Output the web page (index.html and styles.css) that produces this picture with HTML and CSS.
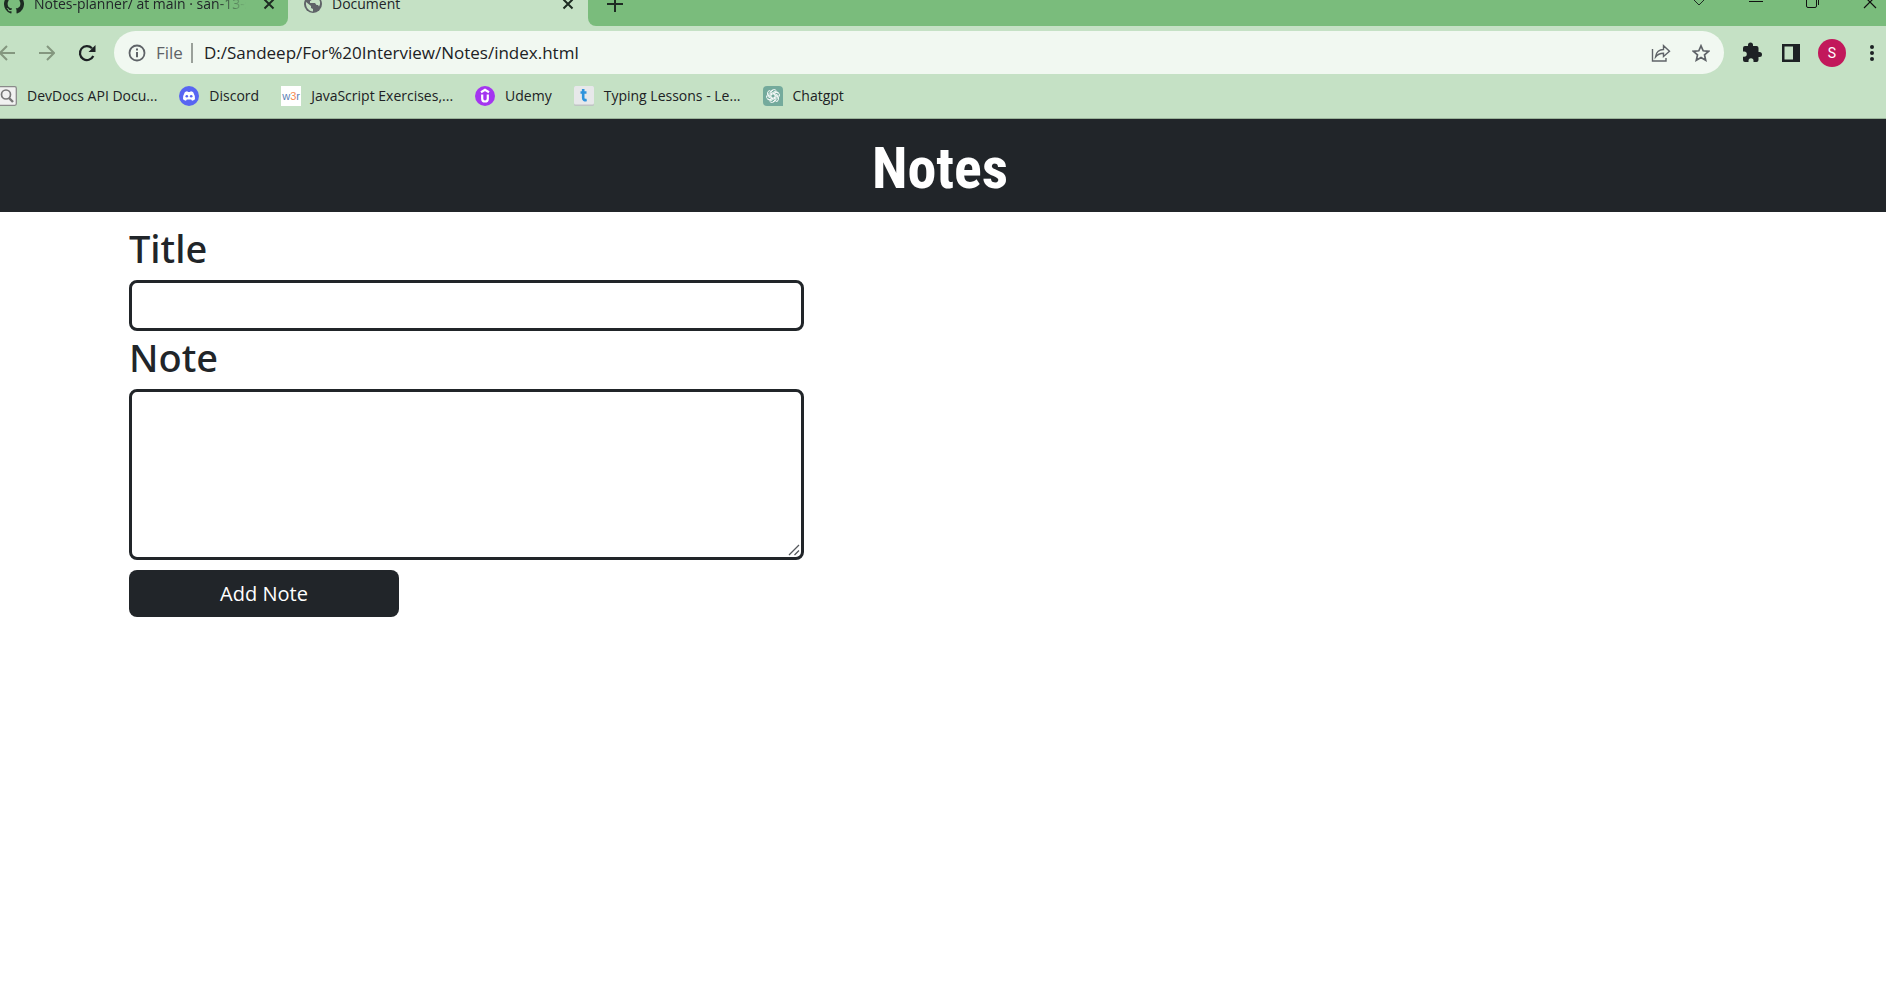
FILE: index.html
```html
<!DOCTYPE html>
<html lang="en">
<head>
<meta charset="utf-8">
<title>Document</title>
<link rel="stylesheet" href="styles.css">
</head>
<body>
<div class="browser">
  <div class="tabstrip">
    <div class="tab tab-first">
      <svg class="icon20" viewBox="0 0 16 16" fill="#1d2b22"><path d="M8 0a8 8 0 0 0-2.5 15.6c.4.1.5-.2.5-.4v-1.5c-2 .4-2.5-.5-2.700-1-.1-.2-.5-.9-.8-1.100-.3-.1-.7-.5 0-.5.600 0 1.100.6 1.200.8.7 1.200 1.900.9 2.300.7.1-.5.3-.9.5-1.100-1.800-.2-3.600-.9-3.600-4 0-.9.3-1.600.8-2.100 0-.2-.3-1 .1-2.100 0 0 .7-.2 2.200.8a7.500 7.500 0 0 1 4 0c1.500-1 2.200-.8 2.200-.8.4 1.100.2 1.900.1 2.100.5.6.8 1.300.8 2.100 0 3.100-1.900 3.800-3.700 4 .3.3.6.8.6 1.500v2.200c0 .2.1.5.5.4A8 8 0 0 0 8 0z"/></svg>
      <span class="tab-title fade">Notes-planner/ at main · san-13-s</span>
      <button class="x" aria-label="Close tab"><svg width="12" height="12" viewBox="0 0 12 12"><path d="M1.500 1.500l9 9M10.500 1.500l-9 9" stroke="#1d2b22" stroke-width="2"/></svg></button>
    </div>
    <div class="tab tab-active">
      <svg class="icon20" viewBox="0 0 20 20"><circle cx="10" cy="10" r="9" fill="#5f6368"/><path d="M3 8l5 4v2l2 1v2.500C5 17 2.500 13 3 8zM12 2.800c0 2-2 2-3 2.500-.5 1-1 1.500-2 1.700v2h5l1.500 2h1.500l1 1.500c2.500-4 .5-8.500-4-9.700z" fill="#c5e1c5"/></svg>
      <span class="tab-title">Document</span>
      <button class="x" aria-label="Close tab"><svg width="12" height="12" viewBox="0 0 12 12"><path d="M1.500 1.500l9 9M10.500 1.500l-9 9" stroke="#1d2b22" stroke-width="2"/></svg></button>
    </div>
    <div class="tab-rest">
      <button class="x" aria-label="New tab"><svg width="16" height="16" viewBox="0 0 16 16"><path d="M8 0v16M0 8h16" stroke="#1d2b22" stroke-width="2"/></svg></button>
      <div class="window-buttons">
        <button aria-label="Search tabs"><svg width="14" height="20" viewBox="0 0 14 20"><path d="M2 6l5 5 5-5" fill="none" stroke="#1d2b22"/></svg></button>
        <button aria-label="Minimize"><svg width="14" height="20" viewBox="0 0 14 20"><path d="M0 7.500h14" stroke="#111"/></svg></button>
        <button aria-label="Restore"><svg width="14" height="20" viewBox="0 0 14 20"><rect x=".5" y="3.500" width="10" height="10" rx="1.500" fill="none" stroke="#111"/><path d="M3 1.500h7.500a2 2 0 0 1 2 2V11" fill="none" stroke="#111"/></svg></button>
        <button aria-label="Close"><svg width="14" height="20" viewBox="0 0 14 20"><path d="M1 2l12 12M13 2L1 14" stroke="#111" stroke-width="1.200"/></svg></button>
      </div>
    </div>
  </div>

  <div class="toolbar">
    <div class="nav">
      <button aria-label="Back"><svg width="16" height="18" viewBox="0 0 16 18"><path d="M15 9H0M7 2L0 9l7 7" fill="none" stroke="#84977f" stroke-width="2"/></svg></button>
      <button aria-label="Forward"><svg width="16" height="18" viewBox="0 0 16 18"><path d="M0 9h15M8 2l7 7-7 7" fill="none" stroke="#84977f" stroke-width="2"/></svg></button>
      <button aria-label="Reload"><svg width="18" height="18" viewBox="0 0 18 18"><path d="M15.300 12A7 7 0 1 1 14 4.200" fill="none" stroke="#1d2124" stroke-width="2.200"/><path d="M17.500 1v7h-7z" fill="#1d2124"/></svg></button>
    </div>
    <div class="address">
      <svg width="18" height="18" viewBox="0 0 18 18"><circle cx="9" cy="9" r="7.500" fill="none" stroke="#5f6368" stroke-width="1.800"/><path d="M9 8v5.300M9 4.600v2" stroke="#5f6368" stroke-width="2"/></svg>
      <label class="scheme" for="url">File</label>
      <input id="url" class="url" type="text" value="D:/Sandeep/For%20Interview/Notes/index.html">
      <button aria-label="Share"><svg width="20" height="18" viewBox="0 0 20 18"><path d="M1.500 5v12h13.500v-3M4.500 13c.5-5 4-7.500 8-7.500V1.700l6 5.500-6 5.300V9.200c-3.500 0-6 1-8 3.800z" fill="none" stroke="#5f6368" stroke-width="1.400"/></svg></button>
      <button aria-label="Bookmark"><svg width="18" height="18" viewBox="0 0 18 18"><path d="M9 1.800l2.200 5 5.400.5-4.100 3.600 1.200 5.300L9 13.400l-4.700 2.800 1.200-5.300L1.400 7.300l5.400-.5z" fill="none" stroke="#5f6368" stroke-width="1.700"/></svg></button>
    </div>
    <div class="actions">
      <button aria-label="Extensions"><svg width="24" height="24" viewBox="0 0 24 24" fill="#1d2124"><path d="M19.500 11H18.500V7a2 2 0 0 0-2-2h-3.500V4a2.500 2.500 0 0 0-5 0v1H5a2 2 0 0 0-2 2v3.500h1.200a2.500 2.500 0 0 1 0 5.200H3V19a2 2 0 0 0 2 2h3.500v-1.200a2.500 2.500 0 0 1 5 0V21h3a2 2 0 0 0 2-2v-3h1a2.500 2.500 0 0 0 0-5z"/></svg></button>
      <button aria-label="Side panel"><svg width="24" height="24" viewBox="0 0 24 24"><path fill-rule="evenodd" d="M3 3h18v18H3zM5.500 5.500v13H14v-13z" fill="#1d2124"/></svg></button>
      <button class="avatar">S</button>
      <button aria-label="Menu"><svg width="22" height="22" viewBox="0 0 22 22" fill="#1d2124"><circle cx="11" cy="5" r="2"/><circle cx="11" cy="11" r="2"/><circle cx="11" cy="17" r="2"/></svg></button>
    </div>
  </div>

  <nav class="bookmarks">
    <a href="#"><svg class="icon20" viewBox="0 0 20 20"><rect x=".7" y=".7" width="18.600" height="18.600" rx="1.500" fill="#f1f1f1" stroke="#8a8a8a" stroke-width="1.300"/><circle cx="9" cy="8.500" r="4.500" fill="none" stroke="#777" stroke-width="1.700"/><path d="M12 12l4 4" stroke="#777" stroke-width="2.400"/></svg><span>DevDocs API Docu...</span></a>
    <a href="#"><svg class="icon20" viewBox="0 0 20 20"><circle cx="10" cy="10" r="10" fill="#5865f2"/><path d="M5.800 6.200Q7 5.500 8.400 5.300l.4.8h2.400l.4-.8q1.400.2 2.600.9 2 3.300 1.800 7-1.400 1.100-3 1.500l-.8-1.200H7.800L7 14.700q-1.600-.4-3-1.500-.2-3.700 1.800-7z" fill="#fff"/><circle cx="7.800" cy="10.300" r="1.300" fill="#5865f2"/><circle cx="12.200" cy="10.300" r="1.300" fill="#5865f2"/></svg><span>Discord</span></a>
    <a href="#"><span class="w3r" aria-hidden="true">w<b>3</b>r</span><span>JavaScript Exercises,...</span></a>
    <a href="#"><svg class="icon20" viewBox="0 0 20 20"><circle cx="10" cy="10" r="10" fill="#a435f0"/><path d="M6 6.200l4-2.400 4 2.400M7.200 8.500v4.200a2.800 2.800 0 0 0 5.600 0V8.500" fill="none" stroke="#fff" stroke-width="2.200"/></svg><span>Udemy</span></a>
    <a href="#"><svg class="icon20" viewBox="0 0 20 20"><rect width="20" height="20" rx="1.500" fill="#bfc5c3"/><rect width="20" height="18.500" rx="1.500" fill="#e7e8ea"/><path d="M9.200 3v9q0 2.500 3.500 2M6.500 6.500h6" fill="none" stroke="#2e93dc" stroke-width="2.600"/></svg><span>Typing Lessons - Le...</span></a>
    <a href="#"><svg class="icon20" viewBox="0 0 20 20"><path d="M4 0h12a4 4 0 0 1 4 4v16H4a4 4 0 0 1-4-4V4a4 4 0 0 1 4-4z" fill="#74aa9c"/><g fill="none" stroke="#fff" stroke-width=".9"><path id="k" d="M8 11.200V6.500a3 3 0 0 1 5.500-1.600M8 7.700l4-2.300 3 1.700"/><use href="#k" transform="rotate(60 10 10)"/><use href="#k" transform="rotate(120 10 10)"/><use href="#k" transform="rotate(180 10 10)"/><use href="#k" transform="rotate(240 10 10)"/><use href="#k" transform="rotate(300 10 10)"/></g></svg><span>Chatgpt</span></a>
  </nav>
</div>

<header class="page-header"><h1>Notes</h1></header>

<main class="container">
  <form class="note-form">
    <label for="title">Title</label>
    <input id="title" class="field" type="text">
    <label for="note">Note</label>
    <div class="note-wrap">
      <textarea id="note" class="field note"></textarea>
      <svg class="grip" width="12" height="12" viewBox="0 0 12 12"><path d="M1 11L11 1M6.500 11L11 6.500" stroke="#55585c" stroke-width="1.300"/></svg>
    </div>
    <button class="add" type="button">Add Note</button>
  </form>
</main>
</body>
</html>
```
FILE: styles.css
```css
* { box-sizing: border-box; }
body {
  margin: 0;
  background: #fff;
  color: #212529;
  font-family: "Open Sans", "Noto Sans", sans-serif;
}
button { padding: 0; border: 0; background: none; font: inherit; color: inherit; }
svg { display: block; flex: none; }
.icon20 { width: 20px; height: 20px; }

.browser { background: #c5e1c5; border-bottom: 1px solid #9ab39a; font-size: 14px; overflow: hidden; }

.tabstrip { display: flex; height: 26px; line-height: 20px; background: #c5e1c5; }
.tab, .tab-rest { display: flex; align-items: flex-end; padding-bottom: 12px; }
.tab .x, .tab-rest .x { height: 20px; display: flex; align-items: center; }
.tab-first { width: 288px; padding-left: 4px; padding-right: 13px; gap: 10px; background: #7abc7c; border-bottom-right-radius: 8px; }
.tab-active { width: 300px; padding-left: 15px; padding-right: 14px; gap: 9px; }
.tab-title { flex: 1; overflow: hidden; white-space: nowrap; }
.fade { mask-image: linear-gradient(to right, #000 83%, transparent 97%); }
.tab-rest { flex: 1; justify-content: space-between; padding-left: 19px; padding-right: 9px; background: #7abc7c; border-bottom-left-radius: 8px; }
.window-buttons { display: flex; gap: 43px; }

.toolbar { display: flex; align-items: center; padding-top: 5px; }
.nav { display: flex; align-items: center; gap: 23px; width: 114px; }
.address {
  flex: 1; display: flex; align-items: center; height: 43px;
  padding: 0 14px; border-radius: 22px; background: #f1f8f1; font-size: 17px;
}
.scheme { margin-left: 10px; padding-right: 8px; border-right: 2px solid #9aa09a; line-height: 20px; color: #5f6368; }
.url { flex: 1; border: 0; padding: 0 0 0 11px; background: none; font: inherit; color: #202124; outline: 0; }
.address button + button { margin-left: 21px; }
.actions { display: flex; align-items: center; gap: 15px; padding: 0 3px 0 16px; }
.avatar { width: 28px; height: 28px; border-radius: 50%; background: #c2185b; color: #fff; font-family: Roboto, sans-serif; font-size: 14px; }

.bookmarks { display: flex; align-items: center; height: 44px; gap: 22px; margin-left: -3px; padding-bottom: 1px; }
.bookmarks a { display: flex; align-items: center; gap: 10px; color: #202124; text-decoration: none; white-space: nowrap; }
.w3r { width: 20px; height: 20px; background: #fff; color: #5b7fb5; font: 11px/20px "Liberation Sans", sans-serif; text-align: center; }
.w3r b { color: #f58a52; font-weight: 400; }

.page-header { background: #212529; color: #fff; padding: 13px 6px 8px 0; text-align: center; }
h1 { margin: 0; font: 700 58px/72px "Roboto Condensed", "Liberation Sans Narrow", sans-serif; }

.container { max-width: 1628px; margin: 0 auto; padding-top: 12px; }
.note-form { display: flex; flex-direction: column; width: 42%; max-width: 675px; }
.note-form label { margin-bottom: 8px; font-family: "Noto Sans", "Open Sans", sans-serif; font-size: 38px; line-height: 48px; font-weight: 500; }
.field { display: block; width: 100%; height: 51px; margin: 0 0 2px; border: 3px solid #212529; border-radius: 8px; background: #fff; font: inherit; font-size: 20px; }
.note-wrap { position: relative; margin-bottom: 10px; }
.note { height: 171px; margin: 0; }
.note::-webkit-resizer { background: transparent; }
.grip { position: absolute; right: 4px; bottom: 4px; pointer-events: none; }
.add { width: 40%; height: 47px; border-radius: 8px; background: #212529; color: #fff; font-size: 20px; }
```
